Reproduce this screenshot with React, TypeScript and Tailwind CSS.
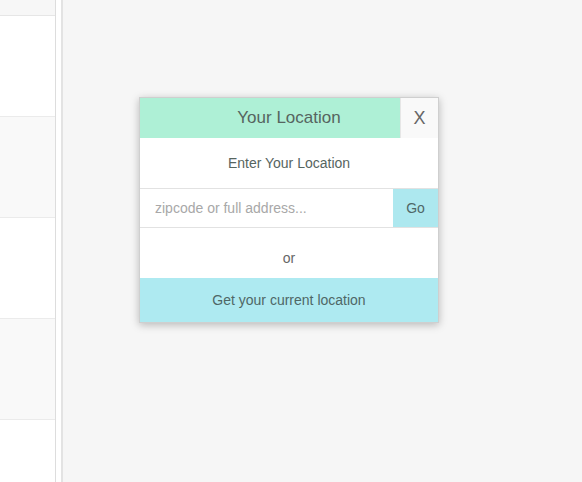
export default function App() {
  const rows = ["bg-white", "bg-[#f9f9f9]", "bg-white", "bg-[#f9f9f9]", "bg-white"];
  return (
    <div className="flex h-[482px] w-[582px] overflow-hidden bg-white font-['Liberation_Sans',Arial,sans-serif]">
      <div className="flex w-[56px] shrink-0 flex-col border-r border-[#dddddd]">
        <div className="h-[16px] shrink-0 border-b border-[#e6e6e6] bg-[#f7f7f7]" />
        {rows.map((bg, i) => (
          <div key={i} className={`h-[101px] shrink-0 border-b border-[#ebebeb] ${bg}`} />
        ))}
      </div>
      <div className="w-[5px] shrink-0 bg-white" />
      <div className="flex flex-1 items-start border-l-2 border-[#e3e3e3] bg-[#f6f6f6] pl-[76px] pt-[97px]">
        <div className="w-[300px] border border-[#cfcfcf] bg-white shadow-[0_2px_8px_rgba(0,0,0,0.25)]">
          <div className="relative flex h-[40px] items-center justify-center bg-[#aef0d6]">
            <span className="text-[17px] text-[#56655f]">Your Location</span>
            <button className="absolute right-0 top-0 flex h-[40px] w-[38px] items-center justify-center border-l border-[#e6e6e6] bg-[#f9f9f9] text-[18px] text-[#666]">
              X
            </button>
          </div>
          <div className="flex h-[50px] items-center justify-center text-[14px] text-[#56655f]">
            Enter Your Location
          </div>
          <div className="flex h-[40px] border-y border-[#e2e2e2]">
            <input
              className="min-w-0 flex-1 bg-white px-[15px] text-[14px] text-[#555] outline-none placeholder:text-[#a8a8a8]"
              placeholder="zipcode or full address..."
            />
            <button className="w-[45px] bg-[#ade8ef] text-[14px] text-[#4f6766]">Go</button>
          </div>
          <div className="flex h-[50px] justify-center pt-[20px] text-[14px] leading-[20px] text-[#666]">or</div>
          <button className="flex h-[44px] w-full items-center justify-center bg-[#aeeaf1] text-[14px] text-[#4f6766]">
            Get your current location
          </button>
        </div>
      </div>
    </div>
  );
}
